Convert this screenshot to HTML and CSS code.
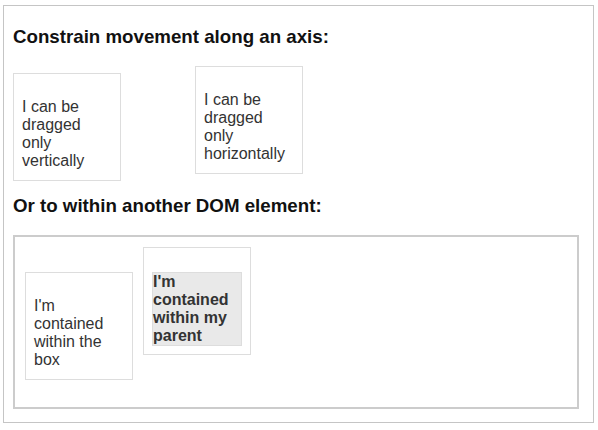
FILE: index.html
```html
<!DOCTYPE html>
<html lang="en">
<head>
    <meta charset="UTF-8">
    <meta name="viewport" content="width=device-width, initial-scale=1.0">
    <title>Draggable - Constrain movement</title>
    <link rel="stylesheet" href="styles.css">
</head>
<body>

    <div class="demo">

        <!-- Eixo -->
        <h3 class="titulo">Constrain movement along an axis:</h3>

        <div class="linha">
            <div class="draggable ui-widget-content vertical">
                <p>I can be dragged only vertically</p>
            </div>
            <div class="draggable ui-widget-content horizontal">
                <p>I can be dragged only horizontally</p>
            </div>
        </div>

        <!-- Contencao -->
        <h3 class="titulo segundo">Or to within another DOM element:</h3>

        <div class="containment-wrapper">
            <div class="draggable ui-widget-content caixa">
                <p>I'm contained within the box</p>
            </div>
            <div class="draggable ui-widget-content">
                <p class="ui-widget-header">I'm contained within my parent</p>
            </div>
        </div>

    </div>

</body>
</html>
```

FILE: styles.css
```css
body {
    font-family: "Liberation Sans", Arial, sans-serif;
    margin: 5px 4px 5px 3px;
}

.demo {
    border: 1px solid #c5c5c5;
    padding: 20px 10px 13px 9px;
}

.titulo {
    font-size: 18.72px;
    line-height: 21px;
    font-weight: bold;
    color: #111;
    margin: 0 0 19px 0;
}

.titulo.segundo {
    margin: 14px 0 19px 0;
}

.linha {
    display: flex;
    align-items: flex-start;
}

.draggable {
    width: 90px;
    height: 90px;
    padding: 8px;
    margin-right: 10px;
    flex-shrink: 0;
}

.draggable p {
    margin: 16px 0;
}

.ui-widget-content {
    border: 1px solid #dddddd;
    background: #ffffff;
    color: #333333;
    font-size: 16px;
}

.ui-widget-header {
    border: 1px solid #dddddd;
    background: #e9e9e9;
    color: #333333;
    font-weight: bold;
}

.vertical {
    margin-top: 7px;
    margin-right: 0;
}

.horizontal {
    margin-left: 74px;
}

.containment-wrapper {
    width: 95%;
    height: 150px;
    border: 2px solid #cccccc;
    padding: 10px;
    display: flex;
    align-items: flex-start;
}

.caixa {
    margin-top: 25px;
}
```
